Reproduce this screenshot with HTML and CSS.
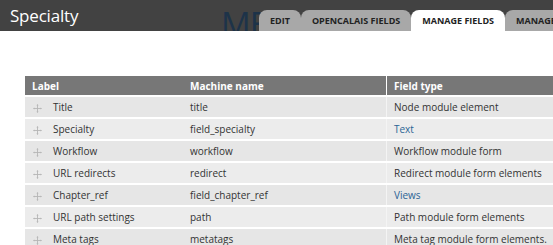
FILE: index.html
```html
<!DOCTYPE html>
<html lang="en">
<head>
  <meta charset="UTF-8" />
  <title>Specialty | Manage fields</title>
  <link rel="stylesheet" href="styles.css">
</head>
<body>
  <div class="page-header">
    <h1 class="page-title">Specialty</h1>
    <span class="logo-text">ME</span>
    <ul class="tabs">
      <li><a href="#">Edit</a></li>
      <li><a href="#">OpenCalais fields</a></li>
      <li class="active"><a href="#">Manage fields</a></li>
      <li><a href="#">Manage display</a></li>
    </ul>
  </div>

  <div class="content">
    <table class="field-table">
      <thead>
        <tr>
          <th class="col-label">Label</th>
          <th class="col-name">Machine name</th>
          <th class="col-type">Field type</th>
        </tr>
      </thead>
      <tbody>
        <tr class="odd">
          <td><svg class="handle" viewBox="0 0 10 10"><path d="M5 1v8M1 5h8"/><path class="tip" d="M5 0L3.8 1.6h2.4zM5 10L3.8 8.4h2.4zM0 5l1.6-1.2v2.4zM10 5L8.4 3.8v2.4z"/></svg>Title</td>
          <td>title</td>
          <td class="col-type">Node module element</td>
        </tr>
        <tr class="even">
          <td><svg class="handle" viewBox="0 0 10 10"><path d="M5 1v8M1 5h8"/><path class="tip" d="M5 0L3.8 1.6h2.4zM5 10L3.8 8.4h2.4zM0 5l1.6-1.2v2.4zM10 5L8.4 3.8v2.4z"/></svg>Specialty</td>
          <td>field_specialty</td>
          <td class="col-type"><a href="#">Text</a></td>
        </tr>
        <tr class="odd">
          <td><svg class="handle" viewBox="0 0 10 10"><path d="M5 1v8M1 5h8"/><path class="tip" d="M5 0L3.8 1.6h2.4zM5 10L3.8 8.4h2.4zM0 5l1.6-1.2v2.4zM10 5L8.4 3.8v2.4z"/></svg>Workflow</td>
          <td>workflow</td>
          <td class="col-type">Workflow module form</td>
        </tr>
        <tr class="even">
          <td><svg class="handle" viewBox="0 0 10 10"><path d="M5 1v8M1 5h8"/><path class="tip" d="M5 0L3.8 1.6h2.4zM5 10L3.8 8.4h2.4zM0 5l1.6-1.2v2.4zM10 5L8.4 3.8v2.4z"/></svg>URL redirects</td>
          <td>redirect</td>
          <td class="col-type">Redirect module form elements</td>
        </tr>
        <tr class="odd">
          <td><svg class="handle" viewBox="0 0 10 10"><path d="M5 1v8M1 5h8"/><path class="tip" d="M5 0L3.8 1.6h2.4zM5 10L3.8 8.4h2.4zM0 5l1.6-1.2v2.4zM10 5L8.4 3.8v2.4z"/></svg>Chapter_ref</td>
          <td>field_chapter_ref</td>
          <td class="col-type"><a href="#">Views</a></td>
        </tr>
        <tr class="even">
          <td><svg class="handle" viewBox="0 0 10 10"><path d="M5 1v8M1 5h8"/><path class="tip" d="M5 0L3.8 1.6h2.4zM5 10L3.8 8.4h2.4zM0 5l1.6-1.2v2.4zM10 5L8.4 3.8v2.4z"/></svg>URL path settings</td>
          <td>path</td>
          <td class="col-type">Path module form elements</td>
        </tr>
        <tr class="odd">
          <td><svg class="handle" viewBox="0 0 10 10"><path d="M5 1v8M1 5h8"/><path class="tip" d="M5 0L3.8 1.6h2.4zM5 10L3.8 8.4h2.4zM0 5l1.6-1.2v2.4zM10 5L8.4 3.8v2.4z"/></svg>Meta tags</td>
          <td>metatags</td>
          <td class="col-type">Meta tag module form elements.</td>
        </tr>
      </tbody>
    </table>
  </div>
</body>
</html>
```

FILE: styles.css
```css
body {
  margin: 0;
  font-family: "Open Sans", sans-serif;
  color: #333;
  background: #fff;
  overflow: hidden;
}
.page-header {
  position: relative;
  display: flex;
  height: 31px;
  background: #424242;
  overflow: hidden;
}
.page-title {
  width: 259px;
  flex-shrink: 0;
  margin: 0;
  padding: 4px 0 0 10px;
  box-sizing: border-box;
  font-size: 17px;
  font-weight: normal;
  color: #fff;
  letter-spacing: -0.2px;
}
.logo-text {
  position: absolute;
  left: 221px;
  top: 6px;
  font-size: 33px;
  line-height: 36px;
  color: #1d3349;
  letter-spacing: -1px;
}
.tabs {
  position: relative;
  display: flex;
  align-self: flex-end;
  margin: 0;
  padding: 0;
  list-style: none;
  white-space: nowrap;
}
.tabs li {
  background: #a8a8a8;
  border-radius: 8px 8px 0 0;
}
.tabs li.active {
  background: #fff;
}
.tabs a {
  display: block;
  height: 21px;
  line-height: 22px;
  padding: 0 11px;
  font-size: 9px;
  font-weight: bold;
  text-transform: uppercase;
  text-decoration: none;
  color: #222;
}
.content {
  padding: 45px 0 0 25px;
}
.field-table {
  width: 620px;
  table-layout: fixed;
  border-collapse: collapse;
  font-size: 10px;
}
.field-table th {
  height: 19px;
  padding: 0 7px;
  background: #777;
  color: #fff;
  text-align: left;
  font-weight: bold;
}
.field-table td {
  height: 20px;
  padding: 0 7px;
  border-top: 2px solid #fff;
  color: #333;
}
.field-table .col-label {
  width: 144px;
}
.field-table .col-name {
  width: 189px;
}
.field-table .col-type {
  border-left: 1px solid #f4f4f4;
}
.field-table th.col-type {
  border-left-color: #fff;
}
tr.odd td {
  background: #e6e6e6;
}
tr.even td {
  background: #ececec;
}
.field-table a {
  color: #2b6495;
  text-decoration: none;
}
.handle {
  display: inline-block;
  width: 9px;
  height: 9px;
  margin: 0 11px 0 1px;
  vertical-align: -2px;
}
.handle path {
  stroke: #b5b5b5;
  stroke-width: 1;
  fill: none;
}
.handle .tip {
  stroke: none;
  fill: #b5b5b5;
}
```
